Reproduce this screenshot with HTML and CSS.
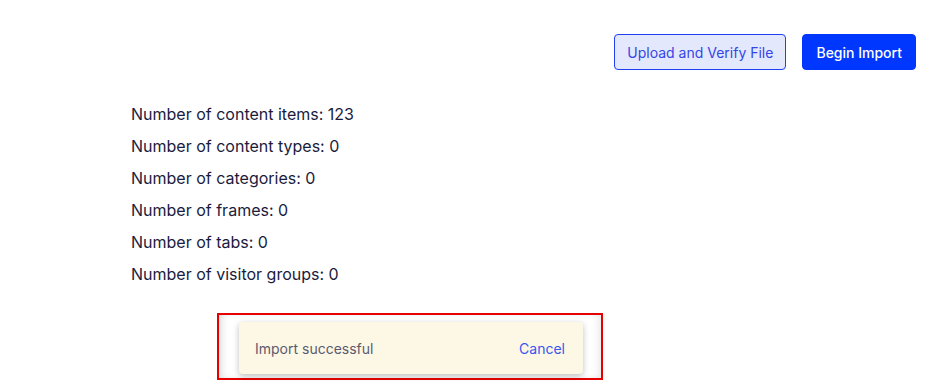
FILE: index.html
```html
<!DOCTYPE html>
<html lang="en">
<head>
  <meta charset="UTF-8" />
  <meta name="viewport" content="width=device-width, initial-scale=1.0"/>
  <title>Import</title>
  <link rel="stylesheet" href="styles.css">
</head>
<body>
  <div class="page">
    <div class="actions">
      <button class="btn btn-outline">Upload and Verify File</button>
      <button class="btn btn-primary">Begin Import</button>
    </div>

    <div class="stats">
      <div class="stat">Number of content items: 123</div>
      <div class="stat">Number of content types: 0</div>
      <div class="stat">Number of categories: 0</div>
      <div class="stat">Number of frames: 0</div>
      <div class="stat">Number of tabs: 0</div>
      <div class="stat">Number of visitor groups: 0</div>
    </div>

    <div class="highlight">
      <div class="toast">
        <span class="toast-text">Import successful</span>
        <a class="toast-action" href="#">Cancel</a>
      </div>
    </div>
  </div>
</body>
</html>
```

FILE: styles.css
```css
body {
  margin: 0;
  font-family: Inter, "Noto Sans", sans-serif;
  background-color: white;
  color: #1a1b3d;
}

.page {
  height: 381px;
  overflow: hidden;
}

.actions {
  display: flex;
  justify-content: flex-end;
  gap: 16px;
  padding: 34px 34px 0 0;
}

.btn {
  height: 36px;
  padding: 0 12px;
  font-family: Inter, "Noto Sans", sans-serif;
  font-size: 14px;
  border-radius: 4px;
  cursor: pointer;
}

.btn-outline {
  background-color: #e3e8fd;
  border: 1px solid #1e3ff2;
  color: #3446e6;
}

.btn-primary {
  padding: 0 13px;
  background-color: #0037ff;
  border: 1px solid #0037ff;
  color: white;
  font-weight: 500;
}

.stats {
  display: flex;
  flex-direction: column;
  padding: 28px 0 0 131px;
}

.stat {
  height: 32px;
  line-height: 32px;
  font-size: 16px;
}

.highlight {
  width: 386px;
  height: 67px;
  margin: 23px 0 0 217px;
  padding: 7px 18px 0 20px;
  box-sizing: border-box;
  border: 2px solid #e60000;
  box-shadow: inset 6px 0 8px -4px rgba(0, 0, 0, 0.15), inset -6px 0 8px -4px rgba(0, 0, 0, 0.1);
}

.toast {
  display: flex;
  justify-content: space-between;
  align-items: center;
  height: 52px;
  padding: 0 18px 0 16px;
  background-color: #fdf7e6;
  border-radius: 4px;
  box-shadow: 0 2px 6px rgba(0, 0, 0, 0.25);
  font-size: 14px;
}

.toast-text {
  color: #5a5b6e;
}

.toast-action {
  color: #3656f0;
  text-decoration: none;
}
```
